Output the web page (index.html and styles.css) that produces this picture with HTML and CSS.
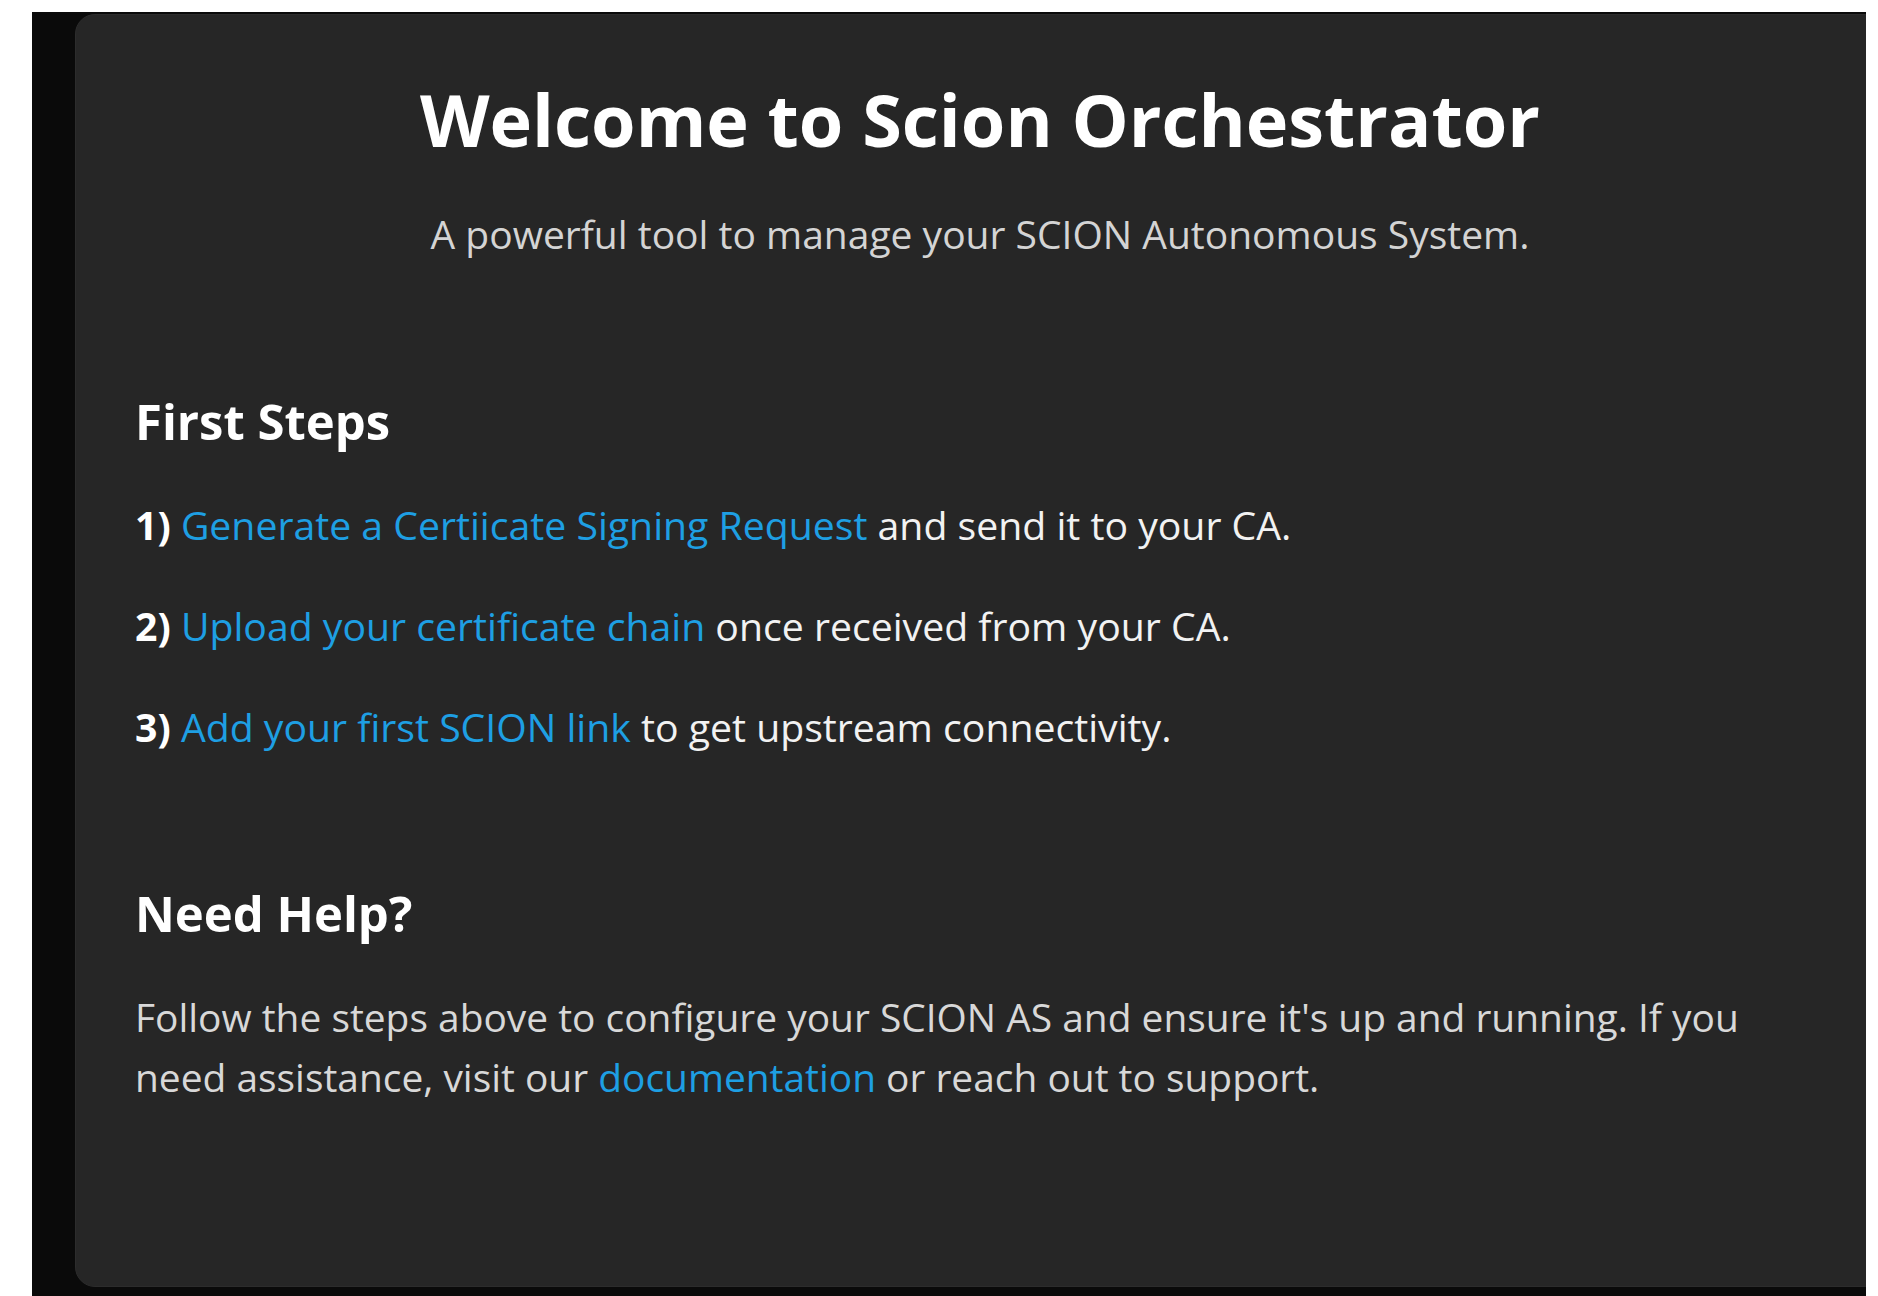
FILE: index.html
```html
<!DOCTYPE html>
<html lang="en">
<head>
<meta charset="utf-8">
<title>Scion Orchestrator</title>
<link rel="stylesheet" href="styles.css">
</head>
<body>
<div class="frame">
  <main class="card">
    <header class="hero">
      <h1 class="title">Welcome to Scion Orchestrator</h1>
      <p class="subtitle">A powerful tool to manage your SCION Autonomous System.</p>
    </header>

    <section class="section">
      <h2 class="section-title">First Steps</h2>
      <div class="steps">
        <p class="step"><strong class="step-num">1)</strong> <a class="link" href="#">Generate a Certiicate Signing Request</a> and send it to your CA.</p>
        <p class="step"><strong class="step-num">2)</strong> <a class="link" href="#">Upload your certificate chain</a> once received from your CA.</p>
        <p class="step"><strong class="step-num">3)</strong> <a class="link" href="#">Add your first SCION link</a> to get upstream connectivity.</p>
      </div>
    </section>

    <section class="section section-help">
      <h2 class="section-title">Need Help?</h2>
      <p class="help-text">Follow the steps above to configure your SCION AS and ensure it's up and running. If you need assistance, visit our <a class="link" href="#">documentation</a> or reach out to support.</p>
    </section>
  </main>
</div>
</body>
</html>
```
FILE: styles.css
```css
html, body {
  margin: 0;
  padding: 0;
  background: #ffffff;
}

body {
  font-family: "Open Sans", "Noto Sans", sans-serif;
  padding: 12px 12px 0 32px;
  height: 1296px;
  box-sizing: border-box;
  overflow: hidden;
}

.frame {
  height: 1284px;
  background: #0a0a0a;
  overflow: hidden;
  padding: 2px 0 0 43px;
  box-sizing: border-box;
}

.card {
  display: block;
  width: 1809px;
  height: 1273px;
  box-sizing: border-box;
  background: #262626;
  border: 1px solid #2c2c2c;
  border-radius: 20px;
  padding: 60px 58px 0 59px;
}

.hero {
  text-align: center;
}

.title {
  margin: 0;
  font-size: 72px;
  line-height: 88px;
  font-weight: 700;
  color: #ffffff;
}

.subtitle {
  margin: 41px 0 0;
  font-size: 39px;
  line-height: 60px;
  color: #d4d4d4;
}

.section {
  margin-top: 128px;
}

.section-help {
  margin-top: 127px;
}

.section-title {
  margin: 0 0 44px;
  font-size: 49px;
  line-height: 59px;
  font-weight: 700;
  color: #ffffff;
}

.steps {
  display: flex;
  flex-direction: column;
  gap: 41px;
}

.step {
  margin: 0;
  font-size: 39.2px;
  line-height: 60px;
  color: #f2f2f2;
}

.step-num {
  font-weight: 700;
  color: #ffffff;
}

.help-text {
  margin: 0;
  max-width: 1650px;
  font-size: 38.9px;
  line-height: 60px;
  color: #d8d8d8;
}

.link {
  color: #1e9fe3;
  text-decoration: none;
}
```
